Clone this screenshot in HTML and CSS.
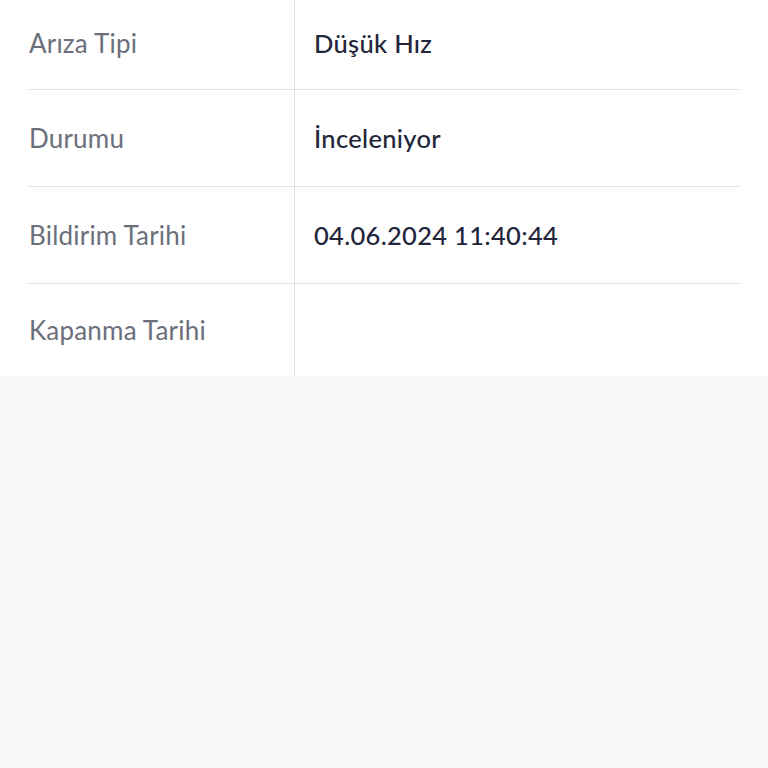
FILE: index.html
```html
<!DOCTYPE html>
<html lang="tr">
<head>
<meta charset="utf-8">
<link rel="stylesheet" href="styles.css">
</head>
<body>
<div class="panel">
  <div class="details">
    <div class="row row-first">
      <div class="label">Arıza Tipi</div>
      <div class="value">Düşük Hız</div>
    </div>
    <div class="row">
      <div class="label">Durumu</div>
      <div class="value">İnceleniyor</div>
    </div>
    <div class="row">
      <div class="label">Bildirim Tarihi</div>
      <div class="value">04.06.2024 11:40:44</div>
    </div>
    <div class="row row-last">
      <div class="label">Kapanma Tarihi</div>
      <div class="value"></div>
    </div>
  </div>
</div>
</body>
</html>
```
FILE: styles.css
```css
html, body {
  margin: 0;
  padding: 0;
}
body {
  background: #f6f7f9;
  font-family: "Lato", "Noto Sans", sans-serif;
  width: 768px;
  height: 768px;
}
.panel {
  background: #ffffff;
  padding: 0 28px;
}
.details {
  display: flex;
  flex-direction: column;
}
.row {
  display: grid;
  grid-template-columns: 266px 1fr;
  height: 96px;
  border-bottom: 1px solid #e1e3eb;
}
.row-first {
  height: 86px;
  padding-bottom: 3px;
}
.row-last {
  height: 92px;
  border-bottom: none;
}
.label {
  display: flex;
  align-items: center;
  padding-left: 1px;
  font-size: 26px;
  letter-spacing: 0.2px;
  color: #6b6f7b;
}
.value {
  display: flex;
  align-items: center;
  padding-left: 19px;
  border-left: 1px solid #e1e3eb;
  font-size: 25.5px;
  font-weight: 500;
  letter-spacing: 0.3px;
  color: #23263a;
}
.row-first .value {
  margin-bottom: -3px;
  padding-bottom: 3px;
}
```
